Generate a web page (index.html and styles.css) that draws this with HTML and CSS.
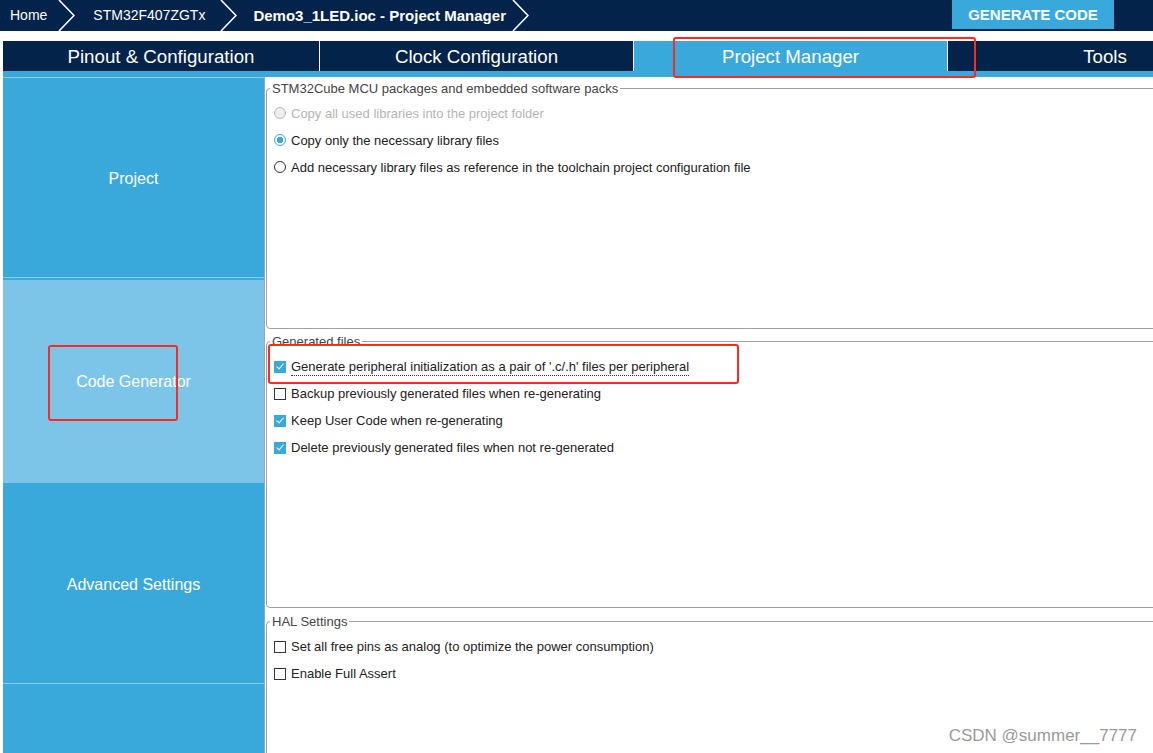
FILE: index.html
```html
<!DOCTYPE html>
<html>
<head>
<meta charset="utf-8">
<link rel="stylesheet" href="styles.css">
</head>
<body>
<div class="topbar">
  <div class="crumbs">
    <span class="crumb first">Home</span>
    <svg class="chev c1" viewBox="0 0 17 31" width="17" height="31"><path d="M1 0 L16 15.5 L1 31" fill="none" stroke="#fff" stroke-width="1.6"/></svg>
    <span class="crumb">STM32F407ZGTx</span>
    <svg class="chev c2" viewBox="0 0 17 31" width="17" height="31"><path d="M1 0 L16 15.5 L1 31" fill="none" stroke="#fff" stroke-width="1.6"/></svg>
    <span class="crumb current">Demo3_1LED.ioc - Project Manager</span>
    <svg class="chev c3" viewBox="0 0 17 31" width="17" height="31"><path d="M1 0 L16 15.5 L1 31" fill="none" stroke="#fff" stroke-width="1.6"/></svg>
  </div>
  <div class="gen-btn">GENERATE CODE</div>
</div>

<div class="tabs">
  <div class="tab t1">Pinout &amp; Configuration</div>
  <div class="tab t2">Clock Configuration</div>
  <div class="tab t3 active">Project Manager</div>
  <div class="tab t4">Tools</div>
</div>
<div class="tab-strip"></div>

<div class="main">
  <div class="side">
    <div class="side-item s1">Project</div>
    <div class="side-item s2 active">Code Generator</div>
    <div class="side-item s3">Advanced Settings</div>
    <div class="side-item s4"></div>
  </div>
  <div class="content">
    <fieldset class="group g1">
      <legend>STM32Cube MCU packages and embedded software packs</legend>
      <div class="row disabled"><span class="radio off"></span><span class="label">Copy all used libraries into the project folder</span></div>
      <div class="row"><span class="radio on"></span><span class="label">Copy only the necessary library files</span></div>
      <div class="row"><span class="radio"></span><span class="label">Add necessary library files as reference in the toolchain project configuration file</span></div>
    </fieldset>
    <fieldset class="group g2">
      <legend>Generated files</legend>
      <div class="row"><span class="check on"></span><span class="label focus">Generate peripheral initialization as a pair of '.c/.h' files per peripheral</span></div>
      <div class="row"><span class="check"></span><span class="label">Backup previously generated files when re-generating</span></div>
      <div class="row"><span class="check on"></span><span class="label">Keep User Code when re-generating</span></div>
      <div class="row"><span class="check on"></span><span class="label">Delete previously generated files when not re-generated</span></div>
    </fieldset>
    <fieldset class="group g3">
      <legend>HAL Settings</legend>
      <div class="row"><span class="check"></span><span class="label">Set all free pins as analog (to optimize the power consumption)</span></div>
      <div class="row"><span class="check"></span><span class="label">Enable Full Assert</span></div>
    </fieldset>
  </div>
</div>

<div class="mark mark-tab"></div>
<div class="mark mark-side"></div>
<div class="mark mark-row"></div>
<div class="watermark">CSDN @summer__7777</div>
</body>
</html>
```
FILE: styles.css
```css
html, body {
  margin: 0;
  padding: 0;
  background: #ffffff;
  width: 1153px;
  height: 753px;
  overflow: hidden;
  font-family: "Liberation Sans", Arial, sans-serif;
  position: relative;
}

.topbar {
  height: 31px;
  background: #03234b;
  display: flex;
  align-items: flex-start;
}
.crumbs {
  display: flex;
  align-items: center;
  height: 31px;
}
.crumb {
  color: #ffffff;
  font-size: 14px;
  line-height: 31px;
  white-space: nowrap;
}
.crumb.first { margin-left: 10px; }
.crumb.current { font-weight: bold; font-size: 15px; }
.chev { display: block; flex: none; }
.c1 { margin: 0 18px 0 11px; }
.c2 { margin: 0 16px 0 15px; }
.c3 { margin: 0 0 0 6px; }

.gen-btn {
  margin-left: auto;
  margin-right: 39px;
  width: 162px;
  height: 29px;
  background: #39a9dc;
  color: #ffffff;
  font-weight: bold;
  font-size: 15px;
  display: flex;
  align-items: center;
  justify-content: center;
}

.tabs {
  margin-top: 10px;
  margin-left: 3px;
  height: 30px;
  display: flex;
  background: #03234b;
  overflow: hidden;
}
.tab {
  flex: none;
  height: 30px;
  padding-top: 1px;
  color: #ffffff;
  font-size: 18.7px;
  display: flex;
  align-items: center;
  justify-content: center;
  border-right: 1px solid #ffffff;
  box-sizing: border-box;
  white-space: nowrap;
}
.t1 { width: 317px; }
.t2 { width: 314px; }
.t3 { width: 314px; }
.t4 { width: 314px; border-right: none; }
.tab.active { background: #39a9dc; }

.tab-strip {
  margin-left: 3px;
  height: 6px;
  background: #39a9dc;
}

.main {
  display: flex;
  margin-left: 3px;
  height: 676px;
}
.side {
  width: 261px;
  flex: none;
  background: #39a9dc;
  display: flex;
  flex-direction: column;
}
.side-item {
  color: #ffffff;
  font-size: 16px;
  display: flex;
  align-items: center;
  justify-content: center;
  box-sizing: border-box;
}
.s1 { height: 200px; border-top: 1px solid #8ccdec; padding-top: 2px; }
.s2 {
  height: 206px;
  border-top: 1px solid #8ccdec;
  background: linear-gradient(#39a9dc 0 2px, #7dc5e8 2px);
  padding-top: 2px;
}
.s3 { height: 200px; padding-top: 3px; }
.s4 { flex: 1; border-top: 1px solid #8ccdec; }

.content {
  flex: 1;
  border-left: 1px solid #a5a5a5;
  overflow: hidden;
  background: #ffffff;
}

.group {
  width: 1000px;
  margin: 4px 0 0 1px;
  padding: 3px 0 0 7px;
  border: 1px solid #a0a0a0;
  border-radius: 4px;
  box-sizing: border-box;
}
.group legend {
  margin-left: -4px;
  padding: 0 2px;
  font-size: 13px;
  line-height: 15px;
  color: #444444;
}
.g1 { height: 248px; padding-top: 3.5px; }
.g2 { height: 274px; margin-top: 5px; padding-top: 4px; }
.g3 { height: 300px; margin-top: 6px; padding-top: 4px; }

.row {
  height: 27px;
  display: flex;
  align-items: center;
  font-size: 13px;
  color: #222222;
}
.row.disabled { color: #b4b4b4; }
.label { margin-left: 5px; white-space: nowrap; }
.label.focus {
  border-bottom: 1px dotted #333333;
  padding-bottom: 1px;
  margin-top: 2px;
}

.radio {
  width: 12px;
  height: 12px;
  box-sizing: border-box;
  border: 1px solid #333333;
  border-radius: 50%;
  background: #ffffff;
  flex: none;
}
.radio.on {
  border-color: #39a9dc;
  background: radial-gradient(circle, #39a9dc 0 3px, #ffffff 3.5px);
}
.radio.off {
  border-color: #b8b8b8;
  background: #eeeeee;
}

.check {
  width: 12px;
  height: 12px;
  box-sizing: border-box;
  border: 1px solid #333333;
  background: #ffffff;
  flex: none;
  position: relative;
}
.check.on {
  border-color: #39a9dc;
  background: #39a9dc;
}
.check.on::after {
  content: "";
  position: absolute;
  left: 3px;
  top: 0px;
  width: 3px;
  height: 6px;
  border-right: 1.6px solid #ffffff;
  border-bottom: 1.6px solid #ffffff;
  transform: rotate(40deg);
}

.mark {
  position: absolute;
  border: 2px solid #ff2a1f;
  border-radius: 3px;
  box-sizing: border-box;
}
.mark-tab { left: 673px; top: 37px; width: 303px; height: 41px; }
.mark-side { left: 48px; top: 345px; width: 130px; height: 76px; }
.mark-row { left: 268px; top: 344px; width: 471px; height: 40px; }

.watermark {
  position: absolute;
  right: 16px;
  bottom: 7px;
  font-size: 17px;
  color: #9a9a9a;
  white-space: nowrap;
}
```
